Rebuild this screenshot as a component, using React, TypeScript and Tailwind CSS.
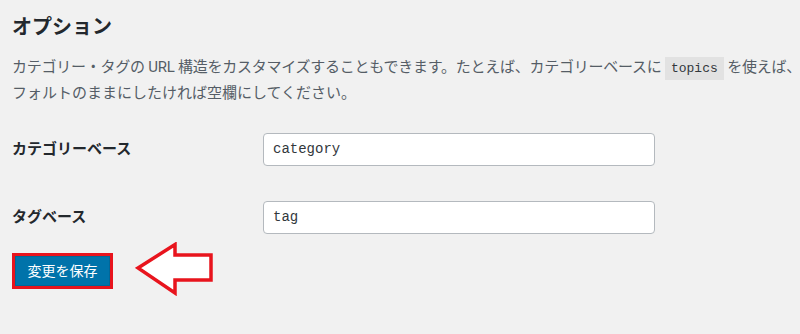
import React from "react";

const jp = { fontFamily: 'Roboto, "Noto Sans CJK JP", sans-serif' };
const mono = { fontFamily: '"Liberation Mono", "Noto Sans CJK JP", monospace' };

export default function App() {
  return (
    <div
      className="w-[800px] h-[334px] overflow-hidden bg-[#f1f1f1] pl-3 text-[#23282d]"
      style={jp}
    >
      <h2 className="pt-[15px] text-[20px] font-bold leading-[24px] text-[#23282d]">オプション</h2>
      <div className="mt-[16px] text-[15px] leading-[25px] text-[#555d66]">
        <div className="whitespace-nowrap tracking-[-0.25px]">
          カテゴリー・タグの URL 構造をカスタマイズすることもできます。たとえば、カテゴリーベースに{" "}
          <code className="bg-[#e2e2e2] px-[6px] py-[4px] text-[13px] tracking-normal text-[#32373c]" style={mono}>
            topics
          </code>{" "}
          を使えば、
        </div>
        <div className="whitespace-nowrap">フォルトのままにしたければ空欄にしてください。</div>
      </div>

      <div className="mt-[27px] flex items-center">
        <div className="w-[251px] text-[15px] font-bold text-[#23282d]">カテゴリーベース</div>
        <div className="flex h-[33px] w-[392px] items-center rounded-[4px] border border-[#b4b9be] bg-white px-[9px] text-[14px] text-[#32373c]" style={mono}>
          category
        </div>
      </div>

      <div className="mt-[35px] flex items-center">
        <div className="w-[251px] text-[15px] font-bold text-[#23282d]">タグベース</div>
        <div className="flex h-[33px] w-[392px] items-center rounded-[4px] border border-[#b4b9be] bg-white px-[9px] text-[14px] text-[#32373c]" style={mono}>
          tag
        </div>
      </div>

      <div className="mt-[8px] flex items-start">
        <div className="mt-[11px] border-[3px] border-[#e8141d]">
          <div className="flex h-[30px] w-[95px] items-center justify-center border border-[#006799] bg-[#0073aa] text-[14px] text-white">
            変更を保存
          </div>
        </div>
        <svg className="ml-[22px]" width="80" height="54" viewBox="0 0 80 54">
          <polygon
            points="3,26 40,2.5 40,13 76,13 76,38 40,38 40,51"
            fill="#ffffff"
            stroke="#e8141d"
            strokeWidth="3.5"
            strokeLinejoin="miter"
          />
        </svg>
      </div>
    </div>
  );
}
